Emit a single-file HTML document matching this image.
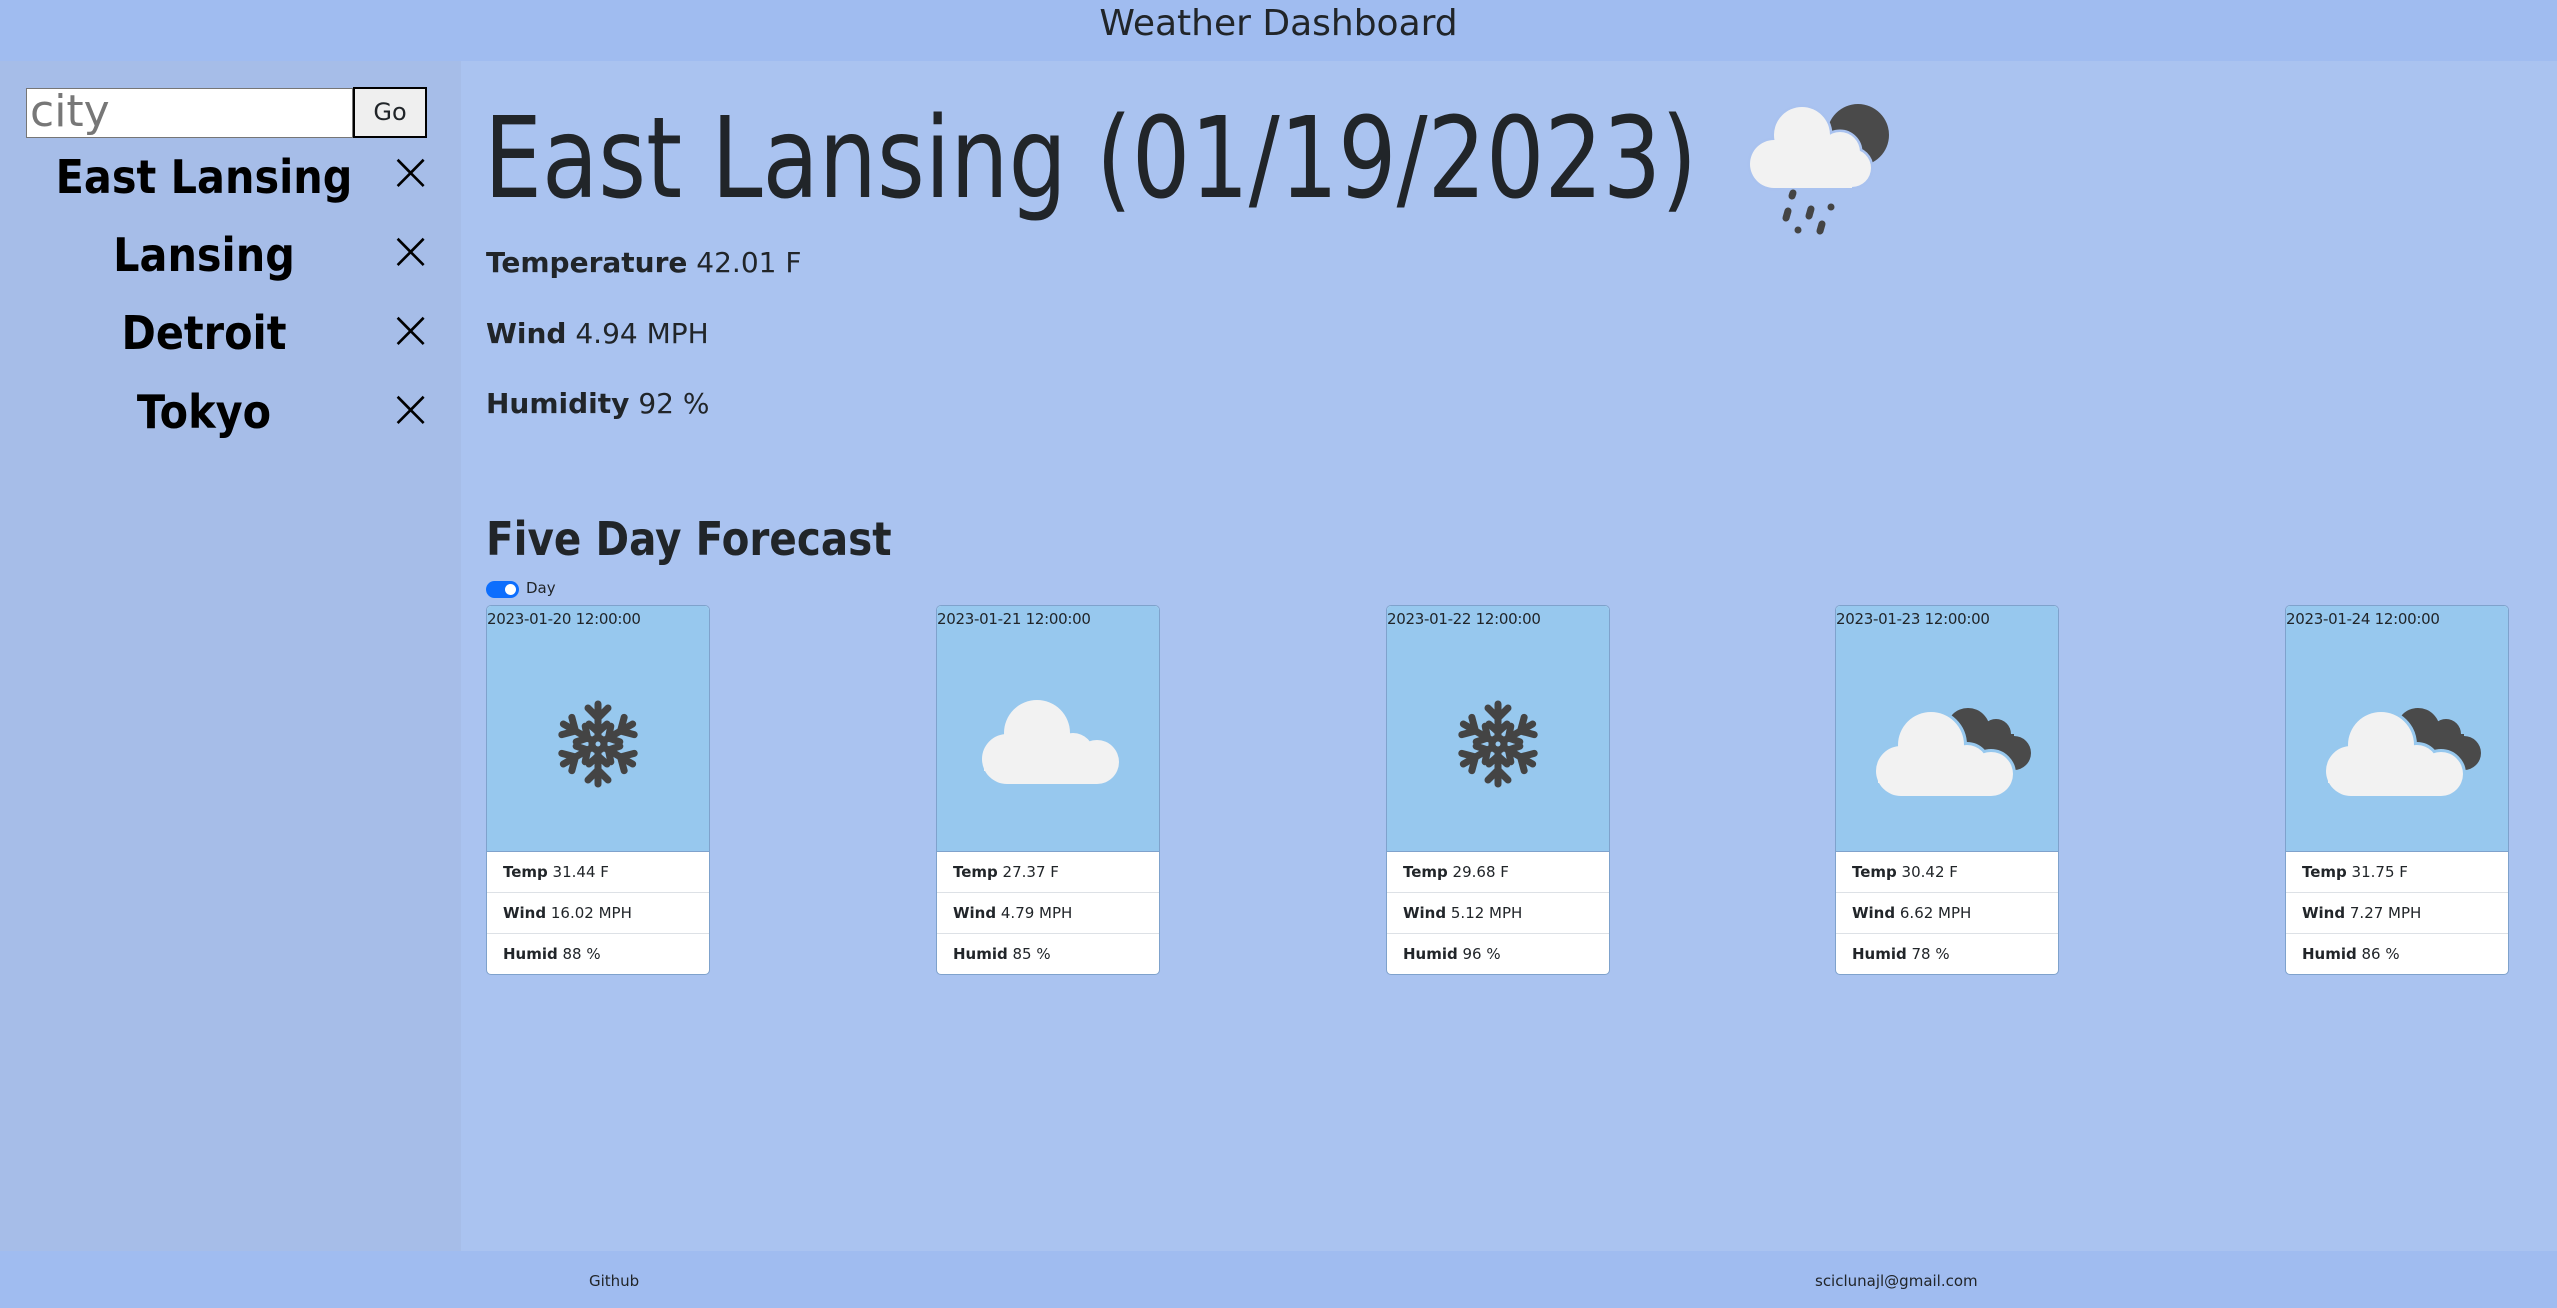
<!DOCTYPE html>
<html><head><meta charset="utf-8"><style>
*{margin:0;padding:0;box-sizing:border-box}
body{width:2557px;height:1308px;position:relative;background:#aac3f0;font-family:"DejaVu Sans","Liberation Sans",sans-serif;color:#212529;overflow:hidden}
.a{position:absolute;white-space:nowrap}
#hdr{left:0;top:0;width:2557px;height:61px;background:#a0bcf0;text-align:center;font-size:36px;line-height:48px}
#side{left:0;top:61px;width:461px;height:1190px;background:#a6bde8}
#foot{left:0;top:1251px;width:2557px;height:57px;background:#a0bcf0;font-size:15px}
.city{font-weight:bold;font-size:46px;color:#000;text-align:center;width:340px;left:34px;transform:scaleX(.9)}
.x{font-size:54px;left:388px;color:#000;font-weight:300}
.card{position:absolute;top:605px;width:224px;height:370px;border:1px solid #7fa2cc;border-radius:5px;background:#fff;overflow:hidden}
.img{height:246px;background:#97c8ee;border-bottom:1px solid #7fa2cc;position:relative}
.date{position:absolute;left:0;top:4px;font-size:15px;letter-spacing:-.3px}
.row{height:41px;border-bottom:1px solid #dde1e6;font-size:15px;line-height:40px;padding-left:16px}
.row:last-child{border:none}
.info{left:486px;font-size:28px}
</style></head><body>
<div class="a" id="hdr">Weather Dashboard</div>
<div class="a" id="side"></div>
<div class="a" style="left:26px;top:88px;width:327px;height:50px;background:#fff;border:1px solid #767676;font-size:44px;line-height:46px;color:#777;padding-left:3px">city</div>
<div class="a" style="left:353px;top:87px;width:74px;height:51px;background:#efefef;border:2px solid #000;font-size:24px;text-align:center;line-height:46px">Go</div>
<div class="a city" style="top:150px">East Lansing</div>
<div class="a x" style="top:140px">×</div>
<div class="a city" style="top:228px">Lansing</div>
<div class="a x" style="top:219px">×</div>
<div class="a city" style="top:306px">Detroit</div>
<div class="a x" style="top:298px">×</div>
<div class="a city" style="top:385px">Tokyo</div>
<div class="a x" style="top:377px">×</div>

<div class="a" style="left:484px;top:94px;font-size:112px;line-height:130px;transform:scaleX(.82);transform-origin:left">East Lansing (01/19/2023)</div>
<svg class="a" style="left:1740px;top:90px" width="160" height="150" viewBox="0 0 160 150">
<circle cx="118" cy="45" r="31" fill="#4a4a4a"/>
<g fill="#f2f2f2" stroke="#a9c2ef" stroke-width="5"><circle cx="62" cy="45" r="28"/><circle cx="100" cy="62" r="20"/><circle cx="112" cy="78" r="19"/><circle cx="34" cy="74" r="24"/></g>
<g fill="#f2f2f2"><circle cx="62" cy="45" r="28"/><circle cx="100" cy="62" r="20"/><circle cx="112" cy="78" r="19"/><circle cx="34" cy="74" r="24"/><rect x="34" y="62" width="78" height="36"/></g>
<g stroke="#444" stroke-width="7" stroke-linecap="round"><line x1="53" y1="103" x2="52" y2="106"/><line x1="48" y1="121" x2="46" y2="128"/><line x1="71" y1="119" x2="69" y2="126"/><line x1="58" y1="140" x2="58" y2="140"/><line x1="82" y1="134" x2="80" y2="141"/><line x1="91" y1="117" x2="91" y2="117"/></g>
</svg>
<div class="a info" style="top:246px"><b>Temperature</b> 42.01 F</div>
<div class="a info" style="top:317px"><b>Wind</b> 4.94 MPH</div>
<div class="a info" style="top:387px"><b>Humidity</b> 92 %</div>
<div class="a" style="left:486px;top:512px;font-size:46px;font-weight:bold;transform:scaleX(.88);transform-origin:left">Five Day Forecast</div>
<div class="a" style="left:486px;top:581px;width:33px;height:17px;border-radius:9px;background:#0d6efd"><div style="position:absolute;right:3px;top:3px;width:11px;height:11px;border-radius:50%;background:#fff"></div></div>
<div class="a" style="left:526px;top:579px;font-size:15px">Day</div>

<svg width="0" height="0" style="position:absolute"><defs>
<g id="snow" stroke="#444" stroke-width="7" stroke-linecap="round" fill="none">
<g id="arm"><line x1="0" y1="0" x2="0" y2="-40"/><polyline points="-10,-36 0,-26 10,-36"/><polyline points="-9,-20 0,-12 9,-20"/></g>
<use href="#arm" transform="rotate(60)"/><use href="#arm" transform="rotate(120)"/><use href="#arm" transform="rotate(180)"/><use href="#arm" transform="rotate(240)"/><use href="#arm" transform="rotate(300)"/>
<circle r="6" fill="#97c8ee"/></g>
<g id="wc" fill="#f2f2f2"><circle cx="95" cy="139" r="33"/><circle cx="131" cy="160" r="21"/><circle cx="155" cy="168" r="22"/><circle cx="65" cy="165" r="25"/><rect x="65" y="160" width="90" height="30"/><rect x="42" y="165" width="131" height="12"/></g>
<g id="dc" fill="#4a4a4a"><circle cx="132" cy="124" r="22"/><circle cx="160" cy="128" r="15"/><circle cx="178" cy="147" r="17"/><rect x="132" y="128" width="46" height="35"/></g>
</defs></svg>

<div class="card" style="left:486px"><div class="img"><div class="date">2023-01-20 12:00:00</div><svg width="224" height="246" style="position:absolute;left:0;top:0"><use href="#snow" transform="translate(111,138)"/></svg></div>
<div class="row"><b>Temp</b> 31.44 F</div><div class="row"><b>Wind</b> 16.02 MPH</div><div class="row"><b>Humid</b> 88 %</div></div>

<div class="card" style="left:936px"><div class="img"><div class="date">2023-01-21 12:00:00</div><svg width="224" height="246" style="position:absolute;left:0;top:0"><use href="#wc" transform="translate(5,-12)"/></svg></div>
<div class="row"><b>Temp</b> 27.37 F</div><div class="row"><b>Wind</b> 4.79 MPH</div><div class="row"><b>Humid</b> 85 %</div></div>

<div class="card" style="left:1386px"><div class="img"><div class="date">2023-01-22 12:00:00</div><svg width="224" height="246" style="position:absolute;left:0;top:0"><use href="#snow" transform="translate(111,138)"/></svg></div>
<div class="row"><b>Temp</b> 29.68 F</div><div class="row"><b>Wind</b> 5.12 MPH</div><div class="row"><b>Humid</b> 96 %</div></div>

<div class="card" style="left:1835px"><div class="img"><div class="date">2023-01-23 12:00:00</div><svg width="224" height="246" style="position:absolute;left:0;top:0"><use href="#dc"/><g stroke="#97c8ee" stroke-width="6"><use href="#wc"/></g><use href="#wc"/></svg></div>
<div class="row"><b>Temp</b> 30.42 F</div><div class="row"><b>Wind</b> 6.62 MPH</div><div class="row"><b>Humid</b> 78 %</div></div>

<div class="card" style="left:2285px"><div class="img"><div class="date">2023-01-24 12:00:00</div><svg width="224" height="246" style="position:absolute;left:0;top:0"><use href="#dc"/><g stroke="#97c8ee" stroke-width="6"><use href="#wc"/></g><use href="#wc"/></svg></div>
<div class="row"><b>Temp</b> 31.75 F</div><div class="row"><b>Wind</b> 7.27 MPH</div><div class="row"><b>Humid</b> 86 %</div></div>

<div class="a" id="foot"></div>
<div class="a" style="left:589px;top:1272px;font-size:15px">Github</div>
<div class="a" style="left:1815px;top:1272px;font-size:15px">sciclunajl@gmail.com</div>
</body></html>
